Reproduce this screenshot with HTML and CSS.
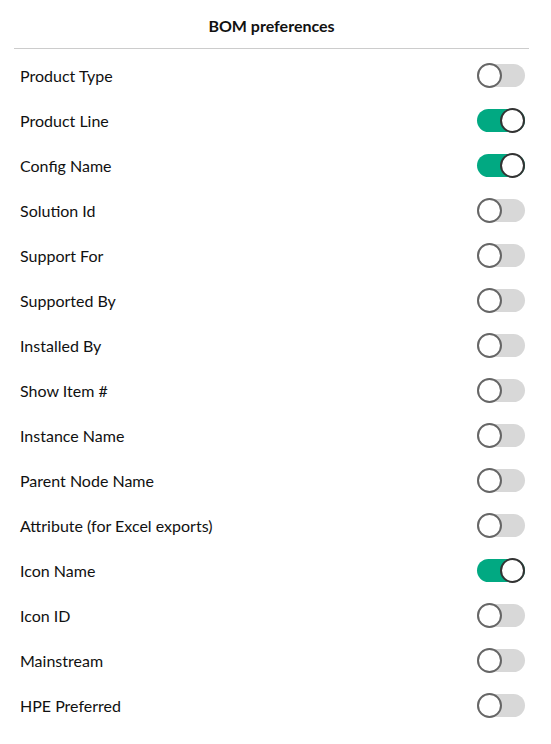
FILE: index.html
```html
<!DOCTYPE html>
<html lang="en">
<head>
    <meta charset="UTF-8">
    <meta name="viewport" content="width=device-width, initial-scale=1.0">
    <title>BOM preferences</title>
    <link rel="stylesheet" href="styles.css">
</head>
<body>

<div class="panel">
    <h2 class="panel-title">BOM preferences</h2>

    <ul class="pref-list">
        <li class="pref-row"><span>Product Type</span><span class="switch"></span></li>
        <li class="pref-row"><span>Product Line</span><span class="switch on"></span></li>
        <li class="pref-row"><span>Config Name</span><span class="switch on"></span></li>
        <li class="pref-row"><span>Solution Id</span><span class="switch"></span></li>
        <li class="pref-row"><span>Support For</span><span class="switch"></span></li>
        <li class="pref-row"><span>Supported By</span><span class="switch"></span></li>
        <li class="pref-row"><span>Installed By</span><span class="switch"></span></li>
        <li class="pref-row"><span>Show Item #</span><span class="switch"></span></li>
        <li class="pref-row"><span>Instance Name</span><span class="switch"></span></li>
        <li class="pref-row"><span>Parent Node Name</span><span class="switch"></span></li>
        <li class="pref-row"><span>Attribute (for Excel exports)</span><span class="switch"></span></li>
        <li class="pref-row"><span>Icon Name</span><span class="switch on"></span></li>
        <li class="pref-row"><span>Icon ID</span><span class="switch"></span></li>
        <li class="pref-row"><span>Mainstream</span><span class="switch"></span></li>
        <li class="pref-row"><span>HPE Preferred</span><span class="switch"></span></li>
    </ul>
</div>

</body>
</html>
```

FILE: styles.css
```css
body {
    font-family: Lato, "Liberation Sans", sans-serif;
    background-color: #fff;
    color: #111;
    margin: 0;
    padding: 0;
}
.panel {
    width: 515px;
    margin-left: 14px;
}
.panel-title {
    margin: 0;
    height: 48px;
    line-height: 51px;
    text-align: center;
    font-size: 16px;
    font-weight: bold;
    border-bottom: 1px solid #ccc;
}
.pref-list {
    list-style: none;
    margin: 4px 0 0 0;
    padding: 0;
}
.pref-row {
    height: 45px;
    display: flex;
    align-items: center;
    justify-content: space-between;
    padding: 0 4px 0 6px;
    font-size: 16px;
}
.switch {
    position: relative;
    width: 48px;
    height: 23px;
    border-radius: 12px;
    background: #d8d8d8;
}
.switch::after {
    content: "";
    position: absolute;
    left: 0;
    top: -1px;
    width: 21px;
    height: 21px;
    border-radius: 50%;
    background: #fff;
    border: 2px solid #666;
}
.switch.on {
    background: #01a982;
}
.switch.on::after {
    left: auto;
    right: 0;
    border-color: #333;
}
```
